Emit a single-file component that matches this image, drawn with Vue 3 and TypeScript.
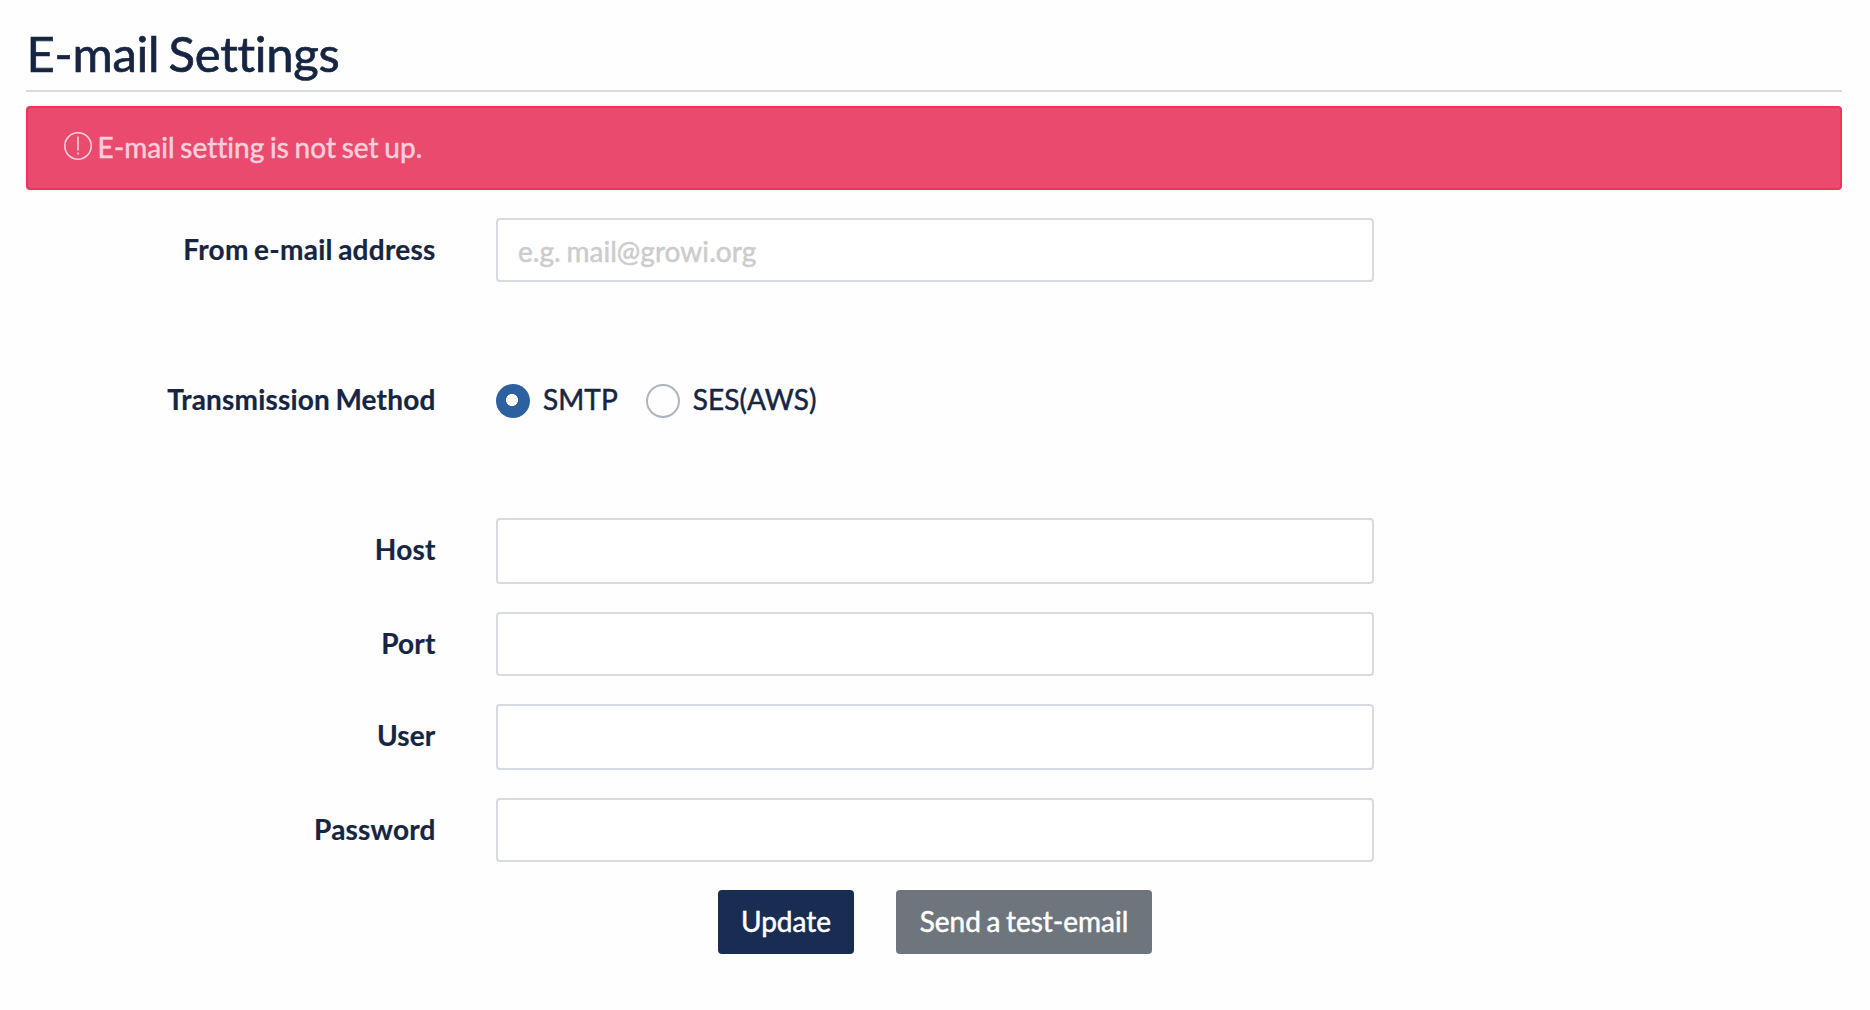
<script setup lang="ts">
import { ref } from 'vue'

interface Field {
  id: string
  label: string
  type: string
  height: number
}

const fromAddress = ref('')
const method = ref('smtp')

const methods = [
  { value: 'smtp', label: 'SMTP' },
  { value: 'ses', label: 'SES(AWS)' },
]

const fields: Field[] = [
  { id: 'host', label: 'Host', type: 'text', height: 66 },
  { id: 'port', label: 'Port', type: 'text', height: 64 },
  { id: 'user', label: 'User', type: 'text', height: 66 },
  { id: 'password', label: 'Password', type: 'password', height: 64 },
]
</script>

<template>
  <main class="settings">
    <h2 class="title">E-mail Settings</h2>

    <div class="alert" role="alert">
      <svg class="alert-icon" viewBox="0 0 28 28" aria-hidden="true">
        <circle cx="14" cy="14" r="13.2" />
        <path d="M14 4.5V18.5M14 20.6V22.4" />
      </svg>
      <span class="alert-text">E-mail setting is not set up.</span>
    </div>

    <form @submit.prevent>
      <div class="row">
        <label class="label from-label" for="from">From e-mail address</label>
        <input id="from" v-model="fromAddress" class="control" type="text" placeholder="e.g. mail@growi.org" />
      </div>

      <div class="row method-row">
        <span class="label">Transmission Method</span>
        <div class="radios">
          <label v-for="m in methods" :key="m.value" class="radio">
            <input v-model="method" class="radio-input" type="radio" name="method" :value="m.value" />
            <span>{{ m.label }}</span>
          </label>
        </div>
      </div>

      <div class="fields">
        <div v-for="f in fields" :key="f.id" class="row">
          <label class="label" :for="f.id">{{ f.label }}</label>
          <input :id="f.id" class="control" :type="f.type" :style="{ height: f.height + 'px' }" />
        </div>
      </div>

      <div class="actions">
        <button class="btn primary" type="submit">Update</button>
        <button class="btn secondary" type="button">Send a test-email</button>
      </div>
    </form>
  </main>
</template>

<style>
body {
  margin: 0;
  background: #fefefe;
}
</style>

<style scoped>
.settings {
  box-sizing: border-box;
  height: 1010px;
  padding: 20px 28px 0 26px;
  overflow: hidden;
  color: #162542;
  font: 400 28px/42px Lato, sans-serif;
  font-variant-ligatures: none;
  word-spacing: -1.6px;
  -webkit-text-stroke: 0.5px currentColor;
}

.title {
  box-sizing: border-box;
  height: 72px;
  margin: 0 0 14px;
  padding: 3px 0 0 0.5px;
  border-bottom: 2px solid #d7dbdf;
  font-size: 49px;
  line-height: 60px;
  font-weight: 400;
  letter-spacing: -0.28px;
  word-spacing: -3px;
  -webkit-text-stroke-width: 0.7px;
}

.alert {
  box-sizing: border-box;
  display: flex;
  align-items: center;
  height: 84px;
  margin-bottom: 28px;
  padding-left: 36px;
  border: 2px solid #ef3459;
  border-radius: 4px;
  background: #eb4a6f;
  color: #facfda;
}

.alert-icon {
  width: 28px;
  height: 28px;
  margin: 0 5.5px 4px 0;
  fill: none;
  stroke: currentColor;
  stroke-width: 1.6;
}

.alert-text {
  padding-bottom: 2px;
  letter-spacing: 0.05px;
}

.row {
  display: grid;
  grid-template-columns: 409.5px 878px;
  column-gap: 60.5px;
  align-items: start;
}

.label {
  padding-top: 10px;
  text-align: right;
  font-weight: 700;
  letter-spacing: 0.18px;
  -webkit-text-stroke-width: 0.2px;
}

.from-label {
  letter-spacing: 0.25px;
}

.control {
  box-sizing: border-box;
  width: 100%;
  height: 64px;
  padding: 2px 20px 0;
  border: 2px solid #d7dbdf;
  border-radius: 4px;
  outline: none;
  background: #fff;
  color: inherit;
  font: inherit;
  font-variant-ligatures: none;
  letter-spacing: 0.05px;
  word-spacing: inherit;
}

.control::placeholder {
  color: #ccc;
  opacity: 1;
}

.method-row {
  margin-top: 86px;
}

.radios {
  display: flex;
  gap: 28px;
  padding-top: 10px;
  letter-spacing: 0.06px;
}

.radio {
  display: flex;
  gap: 13px;
}

.radio-input {
  box-sizing: border-box;
  flex: none;
  appearance: none;
  width: 34px;
  height: 34px;
  margin: 6px 0 0;
  border: 2px solid #adb5bd;
  border-radius: 50%;
  background: #fefefe;
}

.radio-input:checked {
  border: 0;
  background: radial-gradient(circle at 16px 16px, #fff 5.7px, #2d60a1 6.3px);
}

.fields {
  display: grid;
  gap: 28px;
  margin-top: 98px;
}

.actions {
  display: flex;
  gap: 42px;
  margin: 28px 0 0 692px;
}

.btn {
  height: 64px;
  padding: 0 0 2px;
  border: 0;
  border-radius: 4px;
  color: #fff;
  font: inherit;
  font-variant-ligatures: none;
  word-spacing: inherit;
}

.primary {
  width: 136px;
  background: #192c52;
}

.secondary {
  width: 256px;
  background: #6e757d;
}
</style>
